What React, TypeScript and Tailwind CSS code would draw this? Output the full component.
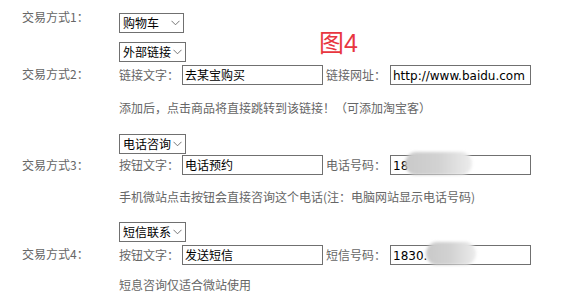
const font = { fontFamily: '"Noto Sans CJK SC", "Liberation Sans", sans-serif' };

const Chevron = () => (
  <svg width="9" height="6" viewBox="0 0 9 6" className="shrink-0">
    <path d="M0.5 0.8 L4.5 4.8 L8.5 0.8" fill="none" stroke="#666" strokeWidth="0.9" />
  </svg>
);

const FakeSelect = ({ label, width }: { label: string; width: string }) => (
  <div
    className={`flex h-[20px] ${width} items-center justify-between border border-[#707070] bg-white pl-[3px] pr-[3px] text-[12px] leading-[18px] text-black`}
  >
    <span>{label}</span>
    <Chevron />
  </div>
);

interface FieldProps {
  value: string;
  blur?: { left: string; width: string };
}

const Field = ({ value, blur }: FieldProps) => (
  <div className="relative h-[20px] w-[141px] border border-[#707070] bg-white pl-[2px] text-[12px] leading-[18px] text-black">
    <span className="font-['DejaVu_Sans','Noto_Sans_CJK_SC',sans-serif]">{value}</span>
    {blur && (
      <div
        className={`absolute top-[-4px] h-[23px] ${blur.left} ${blur.width} rounded-full bg-gradient-to-r from-[#c9c9c9] via-[#d2d2d2] to-[#ececec] blur-[1.5px]`}
      />
    )}
  </div>
);

interface PairProps {
  a: string;
  av: string;
  b: string;
  bv: string;
  blur?: { left: string; width: string };
}

const FieldPair = ({ a, av, b, bv, blur }: PairProps) => (
  <div className="flex h-[20px] items-center text-[12px] text-[#666]">
    <span className="w-[63px] leading-[16px]">{a}</span>
    <Field value={av} />
    <span className="ml-[3px] w-[64px] leading-[16px]">{b}</span>
    <Field value={bv} blur={blur} />
  </div>
);

const Help = ({ children }: { children: string }) => (
  <p className="text-[12px] leading-[16px] text-[#666]">{children}</p>
);

export default function App() {
  return (
    <div className="relative h-[296px] w-[575px] overflow-hidden bg-white" style={font}>
      {/* row 1 */}
      <div className="grid grid-cols-[119px_1fr] pt-[9px]">
        <span className="pl-[22px] text-[12px] leading-[16px] text-[#666]">交易方式1：</span>
        <div className="mt-[4px]">
          <FakeSelect label="购物车" width="w-[65px]" />
        </div>
      </div>

      {/* row 2 */}
      <div className="mt-[9px] grid grid-cols-[119px_1fr]">
        <div className="col-start-2">
          <FakeSelect label="外部链接" width="w-[67px]" />
        </div>
        <span className="col-start-1 row-start-2 self-center pl-[22px] text-[12px] leading-[16px] text-[#666]">
          交易方式2：
        </span>
        <div className="col-start-2 row-start-2 mt-[3px]">
          <FieldPair a="链接文字：" av="去某宝购买" b="链接网址：" bv="http://www.baidu.com" />
        </div>
        <div className="col-start-2 mt-[15px]">
          <Help>添加后，点击商品将直接跳转到该链接！（可添加淘宝客）</Help>
        </div>
      </div>

      {/* row 3 */}
      <div className="mt-[18px] grid grid-cols-[119px_1fr]">
        <div className="col-start-2">
          <FakeSelect label="电话咨询" width="w-[67px]" />
        </div>
        <span className="col-start-1 row-start-2 self-center pl-[22px] text-[12px] leading-[16px] text-[#666]">
          交易方式3：
        </span>
        <div className="col-start-2 row-start-2 mt-[1px]">
          <FieldPair
            a="按钮文字："
            av="电话预约"
            b="电话号码："
            bv="18"
            blur={{ left: "left-[14px]", width: "w-[67px]" }}
          />
        </div>
        <div className="col-start-2 mt-[14px]">
          <Help>手机微站点击按钮会直接咨询这个电话(注：电脑网站显示电话号码)</Help>
        </div>
      </div>

      {/* row 4 */}
      <div className="mt-[17px] grid grid-cols-[119px_1fr]">
        <div className="col-start-2">
          <FakeSelect label="短信联系" width="w-[67px]" />
        </div>
        <span className="col-start-1 row-start-2 self-center pl-[22px] text-[12px] leading-[16px] text-[#666]">
          交易方式4：
        </span>
        <div className="col-start-2 row-start-2 mt-[3px]">
          <FieldPair
            a="按钮文字："
            av="发送短信"
            b="短信号码："
            bv="1830."
            blur={{ left: "left-[35px]", width: "w-[50px]" }}
          />
        </div>
        <div className="col-start-2 mt-[12px]">
          <Help>短息咨询仅适合微站使用</Help>
        </div>
      </div>

      {/* annotation */}
      <div className="absolute left-[319px] top-[29px] text-[25px] leading-none text-[#e8363f]">
        图<span className="font-['Liberation_Sans',sans-serif]">4</span>
      </div>
    </div>
  );
}
